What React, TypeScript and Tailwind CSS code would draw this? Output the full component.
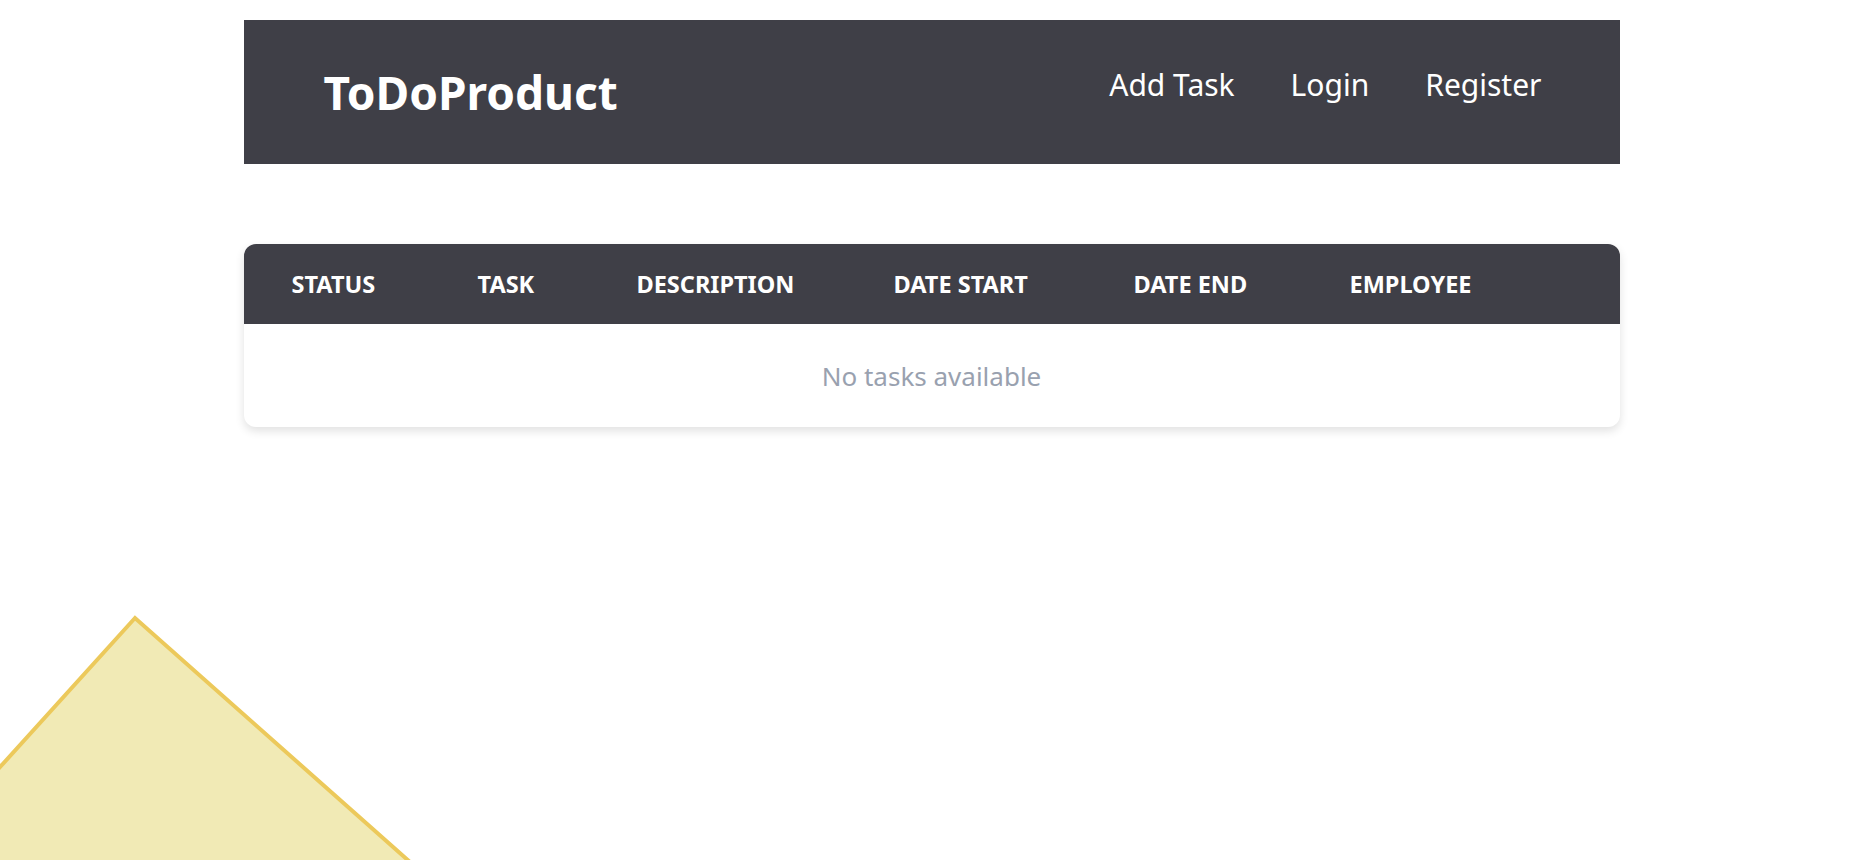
import React from "react";

const cols: { label: string; w: string }[] = [
  { label: "STATUS", w: "w-[234px] pl-12" },
  { label: "TASK", w: "w-[159px]" },
  { label: "DESCRIPTION", w: "w-[257px]" },
  { label: "DATE START", w: "w-[240px]" },
  { label: "DATE END", w: "w-[216px]" },
  { label: "EMPLOYEE", w: "" },
];

export default function App() {
  return (
    <div
      className="relative h-[860px] w-full overflow-hidden bg-white"
      style={{ fontFamily: '"Noto Sans", "Open Sans", sans-serif' }}
    >
      <div className="mx-auto w-[1376px] pt-[20px]">
        <header className="flex h-[144px] items-center justify-between bg-zinc-700 pl-20 pr-[78px]">
          <h1 className="text-[46px] font-bold leading-none text-white">ToDoProduct</h1>
          <nav className="-mt-[14px] flex items-center gap-[56px] text-[30px] leading-none text-white">
            <a>Add Task</a>
            <a>Login</a>
            <a>Register</a>
          </nav>
        </header>

        <div className="mt-[80px] overflow-hidden rounded-xl bg-white shadow-[0_4px_10px_rgba(0,0,0,0.12)]">
          <div className="flex h-[80px] items-center bg-zinc-700 pt-[2px] text-[23.5px] font-bold leading-none text-white">
            {cols.map((c) => (
              <div key={c.label} className={c.w}>
                {c.label}
              </div>
            ))}
          </div>
          <div className="flex h-[103px] items-center justify-center text-[26px] leading-none text-gray-400">
            No tasks available
          </div>
        </div>
      </div>

      <svg
        className="pointer-events-none absolute left-0 top-0"
        width="1863"
        height="860"
        viewBox="0 0 1863 860"
      >
        <polygon
          points="135,618 -200,988 300,1400 650,1075"
          fill="#f1eab5"
          stroke="#ecc95b"
          strokeWidth="4"
          strokeLinejoin="miter"
        />
      </svg>
    </div>
  );
}
